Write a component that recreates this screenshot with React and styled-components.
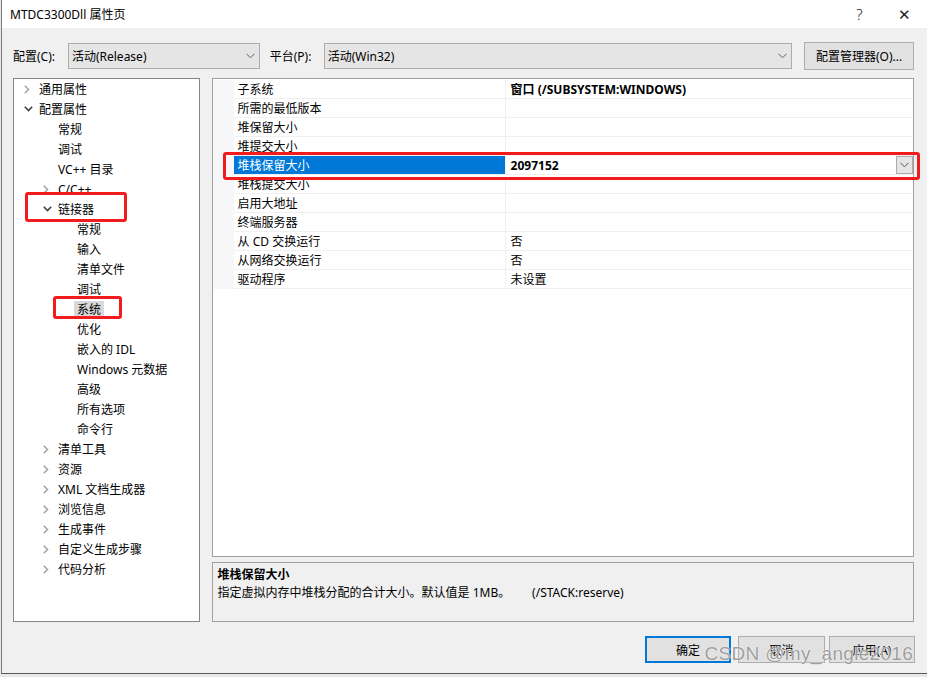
import React from "react";
import styled, { createGlobalStyle } from "styled-components";

const Global = createGlobalStyle`
  html, body { margin: 0; padding: 0; background: #e8e8e8; }
  body {
    font-family: "Noto Sans", "Noto Sans CJK SC", sans-serif;
    font-size: 12px;
    color: #000;
  }
`;

const Window = styled.div`
  position: relative;
  width: 926px;
  height: 674px;
  margin-left: 1px;
  border-left: 1px solid #7a7a7a;
  border-bottom: 1px solid #5a5a5a;
  background: #f0f0f0;
  box-sizing: border-box;
  display: flex;
  flex-direction: column;
  overflow: hidden;
`;

const TitleBar = styled.div`
  height: 28px;
  background: #fff;
  display: flex;
  align-items: center;
  padding: 0 0 0 8px;
  font-size: 12px;
`;

const TitleText = styled.div`
  flex: 1;
`;

const TitleBtn = styled.div`
  width: 45px;
  text-align: center;
  font-size: 15px;
  font-weight: 300;
  color: #222;
`;

const Toolbar = styled.div`
  display: flex;
  align-items: center;
  padding: 14px 13px 0 11px;
  height: 27px;
`;

const Label = styled.span`
  width: ${(p) => p.w}px;
  white-space: nowrap;
`;

const Select = styled.div`
  box-sizing: border-box;
  width: ${(p) => p.w}px;
  height: 26px;
  margin-right: ${(p) => p.mr || 0}px;
  background: #e5e5e5;
  border: 1px solid #acacac;
  display: flex;
  align-items: center;
  padding: 0 4px 0 3px;
  span { flex: 1; }
`;

const Button = styled.div`
  box-sizing: border-box;
  width: ${(p) => p.w}px;
  height: ${(p) => p.h || 27}px;
  background: #e1e1e1;
  border: ${(p) => (p.primary ? "2px solid #0078d7" : "1px solid #adadad")};
  display: flex;
  align-items: center;
  justify-content: center;
  margin-left: ${(p) => p.ml || 0}px;
`;

const Main = styled.div`
  display: flex;
  gap: 12px;
  padding: 9px 13px 0 11px;
  height: 544px;
`;

const Tree = styled.div`
  box-sizing: border-box;
  width: 187px;
  height: 544px;
  background: #fff;
  border: 1px solid #828790;
`;

const TreeRow = styled.div`
  position: relative;
  height: 20px;
  display: flex;
  align-items: center;
  padding-left: ${(p) => 9 + p.level * 19}px;
  white-space: nowrap;
`;

const Chevron = styled.span`
  width: 16px;
  height: 20px;
  display: flex;
  align-items: center;
  justify-content: flex-start;
  padding-left: 1px;
  box-sizing: border-box;
`;

const TreeLabel = styled.span`
  padding: 0 3px;
  margin-left: -3px;
  line-height: 17px;
  background: ${(p) => (p.selected ? "#d9d9d9" : "transparent")};
`;

const Mark = styled.span`
  position: absolute;
  top: ${(p) => p.t}px;
  left: ${(p) => p.l}px;
  width: ${(p) => p.w}px;
  height: ${(p) => p.h}px;
  box-sizing: border-box;
  border: 3px solid #f31c1c;
  border-radius: 3px;
  pointer-events: none;
  z-index: 2;
`;

const Right = styled.div`
  width: 704px;
  display: flex;
  flex-direction: column;
  gap: 5px;
`;

const Grid = styled.div`
  position: relative;
  box-sizing: border-box;
  height: 481px;
  padding-top: 1px;
  background: #fff;
  border: 1px solid #a0a0a0;
`;

const GridRow = styled.div`
  position: relative;
  display: grid;
  grid-template-columns: 21px 272px 1fr;
  height: 19px;
`;

const Gutter = styled.div`
  background: #f7f7fa;
`;

const Cell = styled.div`
  box-sizing: border-box;
  display: flex;
  align-items: center;
  padding-left: ${(p) => (p.value ? 5 : 4)}px;
  border-bottom: 1px solid #f0f0f0;
  border-right: ${(p) => (p.value ? "none" : "1px solid #f0f0f0")};
  background: ${(p) => (p.active ? "#0078d7" : "#fff")};
  color: ${(p) => (p.active ? "#fff" : "#000")};
  font-weight: ${(p) => (p.bold ? 700 : 400)};
  white-space: nowrap;
  span { flex: 1; }
`;

const DropBtn = styled.div`
  box-sizing: border-box;
  width: 17px;
  height: 18px;
  background: #e5e5e5;
  border: 1px solid #acacac;
  display: flex;
  align-items: center;
  justify-content: center;
`;

const Desc = styled.div`
  box-sizing: border-box;
  height: 60px;
  border: 1px solid #a0a0a0;
  padding: 3px 5px;
  line-height: 18px;
`;

const DescTitle = styled.div`
  font-weight: 700;
`;

const Footer = styled.div`
  display: flex;
  justify-content: flex-end;
  padding: 14px 12px 0 0;
`;

const Watermark = styled.div`
  position: absolute;
  right: 14px;
  bottom: 8px;
  font-family: "Liberation Sans", Arial, sans-serif;
  font-size: 19px;
  color: rgba(100, 100, 100, 0.65);
  text-shadow: 0 0 1px #fff, 0 0 1px #fff;
  letter-spacing: 0.3px;
  pointer-events: none;
`;

const Down = ({ color = "#606060" }) => (
  <svg width="9" height="6" viewBox="0 0 9 6">
    <polyline points="0.5,0.8 4.5,4.8 8.5,0.8" fill="none" stroke={color} strokeWidth="1" />
  </svg>
);

const TreeChevron = ({ open }) =>
  open ? (
    <svg width="9" height="6" viewBox="0 0 9 6">
      <polyline points="0.8,0.8 4.5,4.5 8.2,0.8" fill="none" stroke="#404040" strokeWidth="1.6" />
    </svg>
  ) : (
    <svg width="6" height="9" viewBox="0 0 6 9">
      <polyline points="0.8,0.8 4.5,4.5 0.8,8.2" fill="none" stroke="#a6a6a6" strokeWidth="1.6" />
    </svg>
  );

const treeItems = [
  { label: "通用属性", level: 0, exp: "closed" },
  { label: "配置属性", level: 0, exp: "open" },
  { label: "常规", level: 1 },
  { label: "调试", level: 1 },
  { label: "VC++ 目录", level: 1 },
  { label: "C/C++", level: 1, exp: "closed" },
  { label: "链接器", level: 1, exp: "open", mark: { t: -7, l: 11, w: 102, h: 30 } },
  { label: "常规", level: 2 },
  { label: "输入", level: 2 },
  { label: "清单文件", level: 2 },
  { label: "调试", level: 2 },
  { label: "系统", level: 2, selected: true, mark: { t: -3, l: 39, w: 69, h: 23 } },
  { label: "优化", level: 2 },
  { label: "嵌入的 IDL", level: 2 },
  { label: "Windows 元数据", level: 2 },
  { label: "高级", level: 2 },
  { label: "所有选项", level: 2 },
  { label: "命令行", level: 2 },
  { label: "清单工具", level: 1, exp: "closed" },
  { label: "资源", level: 1, exp: "closed" },
  { label: "XML 文档生成器", level: 1, exp: "closed" },
  { label: "浏览信息", level: 1, exp: "closed" },
  { label: "生成事件", level: 1, exp: "closed" },
  { label: "自定义生成步骤", level: 1, exp: "closed" },
  { label: "代码分析", level: 1, exp: "closed" },
];

const props = [
  { name: "子系统", value: "窗口 (/SUBSYSTEM:WINDOWS)", bold: true },
  { name: "所需的最低版本", value: "" },
  { name: "堆保留大小", value: "" },
  { name: "堆提交大小", value: "" },
  { name: "堆栈保留大小", value: "2097152", bold: true, active: true },
  { name: "堆栈提交大小", value: "" },
  { name: "启用大地址", value: "" },
  { name: "终端服务器", value: "" },
  { name: "从 CD 交换运行", value: "否" },
  { name: "从网络交换运行", value: "否" },
  { name: "驱动程序", value: "未设置" },
];

export default function App() {
  return (
    <>
      <Global />
      <Window>
        <TitleBar>
          <TitleText>MTDC3300Dll 属性页</TitleText>
          <TitleBtn>?</TitleBtn>
          <TitleBtn>✕</TitleBtn>
        </TitleBar>

        <Toolbar>
          <Label w={55}>配置(C):</Label>
          <Select w={192} mr={10}>
            <span>活动(Release)</span>
            <Down />
          </Select>
          <Label w={54}>平台(P):</Label>
          <Select w={469} mr={12}>
            <span>活动(Win32)</span>
            <Down />
          </Select>
          <Button w={110} h={28}>配置管理器(O)...</Button>
        </Toolbar>

        <Main>
          <Tree>
            {treeItems.map((it, i) => (
              <TreeRow key={i} level={it.level}>
                <Chevron>{it.exp && <TreeChevron open={it.exp === "open"} />}</Chevron>
                <TreeLabel selected={it.selected}>{it.label}</TreeLabel>
                {it.mark && <Mark {...it.mark} />}
              </TreeRow>
            ))}
          </Tree>

          <Right>
            <Grid>
              {props.map((p, i) => (
                <GridRow key={i}>
                  <Gutter />
                  <Cell active={p.active}>{p.name}</Cell>
                  <Cell value bold={p.bold}>
                    <span>{p.value}</span>
                    {p.active && (
                      <DropBtn>
                        <Down color="#505050" />
                      </DropBtn>
                    )}
                  </Cell>
                  {p.active && <Mark t={-4} l={10} w={697} h={28} />}
                </GridRow>
              ))}
            </Grid>
            <Desc>
              <DescTitle>堆栈保留大小</DescTitle>
              <div>指定虚拟内存中堆栈分配的合计大小。默认值是 1MB。&nbsp;&nbsp;&nbsp;&nbsp;&nbsp;&nbsp;&nbsp;(/STACK:reserve)</div>
            </Desc>
          </Right>
        </Main>

        <Footer>
          <Button w={86} primary>确定</Button>
          <Button w={87} ml={7}>取消</Button>
          <Button w={86} ml={4}>应用(A)</Button>
        </Footer>

        <Watermark>CSDN @my_angle2016</Watermark>
      </Window>
    </>
  );
}
